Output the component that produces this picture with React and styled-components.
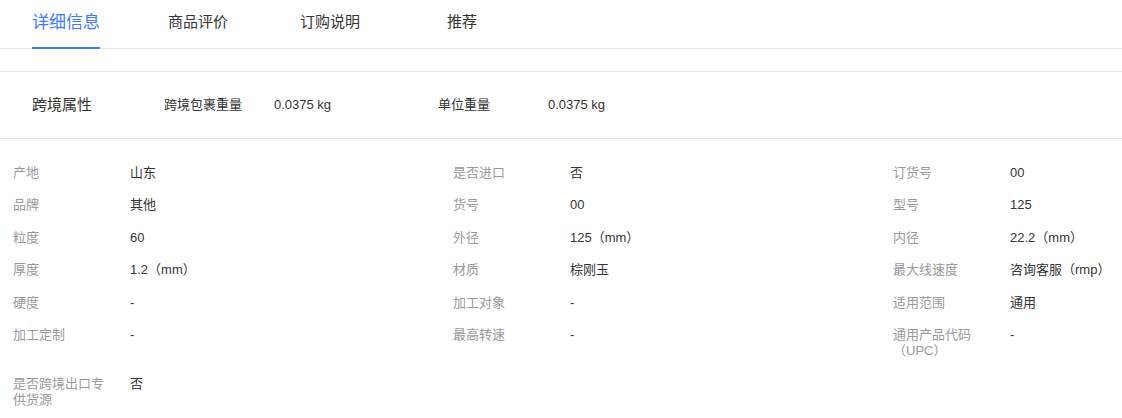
import React from 'react';
import styled, { createGlobalStyle } from 'styled-components';

const GlobalStyle = createGlobalStyle`
	html, body {
		margin: 0;
		padding: 0;
		background: #fff;
		overflow: hidden;
	}
	body {
		font-family: 'Liberation Sans', 'Noto Sans CJK SC', sans-serif;
		color: #333;
	}
`;

const tabs = [ '详细信息', '商品评价', '订购说明', '推荐' ];

const crossBorder = [
	{ label: '跨境包裹重量', value: '0.0375 kg' },
	{ label: '单位重量', value: '0.0375 kg' }
];

const specs = [
	{ label: '产地', value: '山东' },
	{ label: '是否进口', value: '否' },
	{ label: '订货号', value: '00' },
	{ label: '品牌', value: '其他' },
	{ label: '货号', value: '00' },
	{ label: '型号', value: '125' },
	{ label: '粒度', value: '60' },
	{ label: '外径', value: '125（mm）' },
	{ label: '内径', value: '22.2（mm）' },
	{ label: '厚度', value: '1.2（mm）' },
	{ label: '材质', value: '棕刚玉' },
	{ label: '最大线速度', value: '咨询客服（rmp）' },
	{ label: '硬度', value: '-' },
	{ label: '加工对象', value: '-' },
	{ label: '适用范围', value: '通用' },
	{ label: '加工定制', value: '-' },
	{ label: '最高转速', value: '-' },
	{ label: '通用产品代码（UPC）', value: '-' },
	{ label: '是否跨境出口专供货源', value: '否' }
];

const Page = styled.div`
	width: 1122px;
	min-height: 418px;
`;

const TabBar = styled.div`
	display: flex;
	height: 48px;
	border-bottom: 1px solid #e8e8e8;
`;

const Tab = styled.div`
	width: 132px;
	display: flex;
	justify-content: center;
	align-items: center;
	padding-bottom: 8px;
	box-sizing: border-box;
	cursor: pointer;
`;

const TabText = styled.span`
	position: relative;
	height: 100%;
	display: flex;
	align-items: center;
	font-size: ${(p) => (p.active ? '17px' : '15px')};
	color: ${(p) => (p.active ? '#3b7bfd' : '#333')};

	&::after {
		content: '';
		display: ${(p) => (p.active ? 'block' : 'none')};
		position: absolute;
		left: 0;
		right: 0;
		bottom: -9px;
		height: 2px;
		background: #3b7bfd;
	}
`;

const CrossRow = styled.div`
	margin-top: 22px;
	height: 66px;
	border-top: 1px solid #e8e8e8;
	border-bottom: 1px solid #e8e8e8;
	display: flex;
	align-items: center;
	padding-left: 32px;
`;

const CrossTitle = styled.div`
	width: 132px;
	font-size: 15px;
	line-height: 18px;
	color: #333;
`;

const CrossPair = styled.div`
	display: flex;
	align-items: baseline;
	width: 274px;
	font-size: 13px;
	line-height: 16px;
	color: #333;
`;

const CrossLabel = styled.span`
	width: 110px;
`;

const SpecGrid = styled.div`
	display: grid;
	grid-template-columns: 440px 440px 1fr;
	padding: 18px 0 0 13px;
`;

const SpecItem = styled.div`
	display: flex;
	align-items: flex-start;
	padding: 8px 0;
	font-size: 13px;
	line-height: 16.4px;
`;

const SpecLabel = styled.div`
	width: 100px;
	flex-shrink: 0;
	margin-right: 17px;
	color: #999;
`;

const SpecValue = styled.div`
	color: #333;
	white-space: nowrap;
`;

export default function App() {
	return (
		<Page>
			<GlobalStyle />
			<TabBar>
				{tabs.map((t, i) => (
					<Tab key={t}>
						<TabText active={i === 0}>{t}</TabText>
					</Tab>
				))}
			</TabBar>
			<CrossRow>
				<CrossTitle>跨境属性</CrossTitle>
				{crossBorder.map((c) => (
					<CrossPair key={c.label}>
						<CrossLabel>{c.label}</CrossLabel>
						<span>{c.value}</span>
					</CrossPair>
				))}
			</CrossRow>
			<SpecGrid>
				{specs.map((s) => (
					<SpecItem key={s.label}>
						<SpecLabel>{s.label}</SpecLabel>
						<SpecValue>{s.value}</SpecValue>
					</SpecItem>
				))}
			</SpecGrid>
		</Page>
	);
}
